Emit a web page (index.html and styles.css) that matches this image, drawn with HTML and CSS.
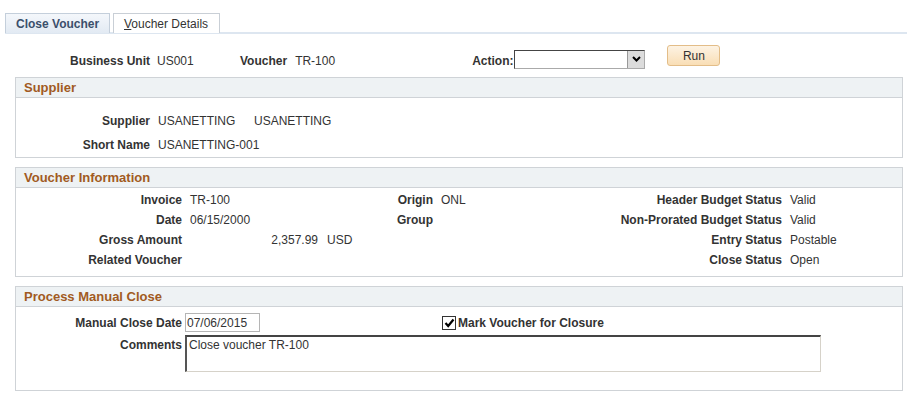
FILE: index.html
```html
<!DOCTYPE html>
<html lang="en">
<head>
  <meta charset="UTF-8">
  <title>Close Voucher</title>
  <link rel="stylesheet" href="styles.css">
</head>
<body>
  <div class="tabs">
    <div class="tab active">Close Voucher</div>
    <div class="tab"><u>V</u>oucher Details</div>
  </div>

  <div class="keyrow">
    <span class="lbl bu-lbl">Business Unit</span>
    <span class="val bu-val">US001</span>
    <span class="lbl">Voucher</span>
    <span class="val vch-val">TR-100</span>
    <span class="lbl">Action:</span>
    <div class="select"><span class="arrow"><svg width="9" height="6" viewBox="0 0 9 6"><path d="M1 1 L4.5 4.5 L8 1" fill="none" stroke="#000" stroke-width="2"/></svg></span></div>
    <button class="run">Run</button>
  </div>

  <div class="box">
    <div class="box-head">Supplier</div>
    <div class="box-body supplier">
      <div class="row">
        <span class="lbl">Supplier</span>
        <span class="val sup-id">USANETTING</span>
        <span class="val">USANETTING</span>
      </div>
      <div class="row">
        <span class="lbl">Short Name</span>
        <span class="val">USANETTING-001</span>
      </div>
    </div>
  </div>

  <div class="box">
    <div class="box-head">Voucher Information</div>
    <div class="box-body info">
      <span class="lbl">Invoice</span><span class="val">TR-100</span>
      <span class="lbl">Origin</span><span class="val">ONL</span>
      <span class="lbl">Header Budget Status</span><span class="val">Valid</span>

      <span class="lbl">Date</span><span class="val">06/15/2000</span>
      <span class="lbl">Group</span><span class="val"></span>
      <span class="lbl">Non-Prorated Budget Status</span><span class="val">Valid</span>

      <span class="lbl">Gross Amount</span><span class="val"><span class="amount">2,357.99</span><span class="cur">USD</span></span>
      <span class="lbl"></span><span class="val"></span>
      <span class="lbl">Entry Status</span><span class="val">Postable</span>

      <span class="lbl">Related Voucher</span><span class="val"></span>
      <span class="lbl"></span><span class="val"></span>
      <span class="lbl">Close Status</span><span class="val">Open</span>
    </div>
  </div>

  <div class="box">
    <div class="box-head">Process Manual Close</div>
    <div class="box-body close">
      <div class="row">
        <span class="lbl">Manual Close Date</span>
        <input class="date" type="text" value="07/06/2015">
        <label class="mark"><span class="check"><svg width="11" height="10" viewBox="0 0 11 10"><path d="M1.5 5 L4.2 8 L9.5 1.5" fill="none" stroke="#000" stroke-width="2.2"/></svg></span>Mark Voucher for Closure</label>
      </div>
      <div class="row comments-row">
        <span class="lbl">Comments</span>
        <textarea class="comments">Close voucher TR-100</textarea>
      </div>
    </div>
  </div>
</body>
</html>
```

FILE: styles.css
```css
* {
  box-sizing: border-box;
}
body {
  margin: 0;
  padding: 0;
  font-family: "Liberation Sans", Arial, sans-serif;
  font-size: 12px;
  color: #333;
  background: #fff;
}
.lbl {
  font-weight: bold;
  color: #333;
  white-space: nowrap;
}
.val {
  white-space: nowrap;
}
.tabs {
  display: flex;
  margin: 13px 6px 0 5px;
  border-bottom: 2px solid #dde6f0;
  height: 21px;
}
.tab {
  height: 20px;
  padding: 3px 0 0 10px;
  border: 1px solid #c9cfd6;
  border-bottom: none;
  margin-right: 3px;
  font-size: 12px;
  color: #333;
  background: #fff;
  white-space: nowrap;
}
.tab.active {
  width: 105px;
  font-weight: bold;
  color: #3b4f6b;
  background: linear-gradient(#f4f7fb, #e2eaf3);
  border-color: #c4cfdb;
}
.tab:nth-child(2) {
  width: 107px;
}
.keyrow {
  display: flex;
  align-items: center;
  height: 33px;
  margin-top: 10px;
}
.bu-lbl {
  width: 150px;
  text-align: right;
}
.bu-val {
  margin-left: 7px;
  width: 83px;
}
.vch-val {
  margin-left: 8px;
  width: 177px;
}
.select {
  position: relative;
  width: 131px;
  height: 19px;
  margin-left: 1px;
  margin-top: -3px;
  border: 1px solid #444;
  border-right-color: #aaa;
  border-bottom-color: #aaa;
  background: #fff;
}
.arrow {
  position: absolute;
  right: 0;
  top: 0;
  width: 17px;
  height: 17px;
  background: #dcdcdc;
  border-left: 1px solid #999;
  display: flex;
  align-items: center;
  justify-content: center;
}
.run {
  margin-left: 22px;
  margin-top: -10px;
  width: 53px;
  height: 21px;
  font-family: inherit;
  font-size: 12px;
  color: #333;
  border: 1px solid #e3bd88;
  border-radius: 3px;
  background: linear-gradient(#fdf3e4, #f9deb5);
}
.box {
  margin: 0 10px 9px 15px;
  border: 1px solid #cfd3d7;
}
.box-head {
  height: 20px;
  padding: 2px 8px 0;
  background: #eef2f4;
  border-bottom: 1px solid #cfd3d7;
  font-size: 13px;
  font-weight: bold;
  color: #a15a22;
}
.box-body .row {
  display: flex;
  align-items: center;
}
.supplier {
  padding: 11px 0 0;
}
.supplier .row {
  height: 24px;
}
.supplier .lbl {
  width: 134px;
  text-align: right;
  margin-right: 8px;
}
.sup-id {
  width: 96px;
}
.info {
  display: grid;
  grid-template-columns: 166px 162px 73px 139px 194px 1fr;
  column-gap: 8px;
  grid-auto-rows: 20px;
  align-items: center;
  padding: 2px 0 6px;
}
.info .lbl {
  text-align: right;
}
.amount {
  display: inline-block;
  width: 128px;
  text-align: right;
}
.cur {
  margin-left: 9px;
}
.close {
  padding: 6px 0 18px;
}
.close .lbl {
  width: 166px;
  text-align: right;
  margin-right: 3px;
}
.date {
  width: 75px;
  height: 19px;
  padding: 0 1px;
  border: 1px solid #b5b5b5;
  font-family: inherit;
  font-size: 12px;
  color: #333;
}
.mark {
  display: flex;
  align-items: center;
  margin-left: 182px;
  font-weight: bold;
  color: #333;
}
.check {
  width: 14px;
  height: 14px;
  border: 1px solid #333;
  margin-right: 2px;
  display: flex;
  align-items: center;
  justify-content: center;
  background: #fff;
}
.box-body .comments-row {
  align-items: flex-start;
  margin-top: 3px;
}
.comments-row .lbl {
  padding-top: 3px;
}
.comments {
  display: block;
  width: 636px;
  height: 37px;
  padding: 1px 2px;
  resize: none;
  border-style: solid;
  border-width: 2px 1px 1px 2px;
  border-color: #444 #d6d2c9 #d6d2c9 #555;
  font-family: inherit;
  font-size: 12px;
  color: #333;
}
```
